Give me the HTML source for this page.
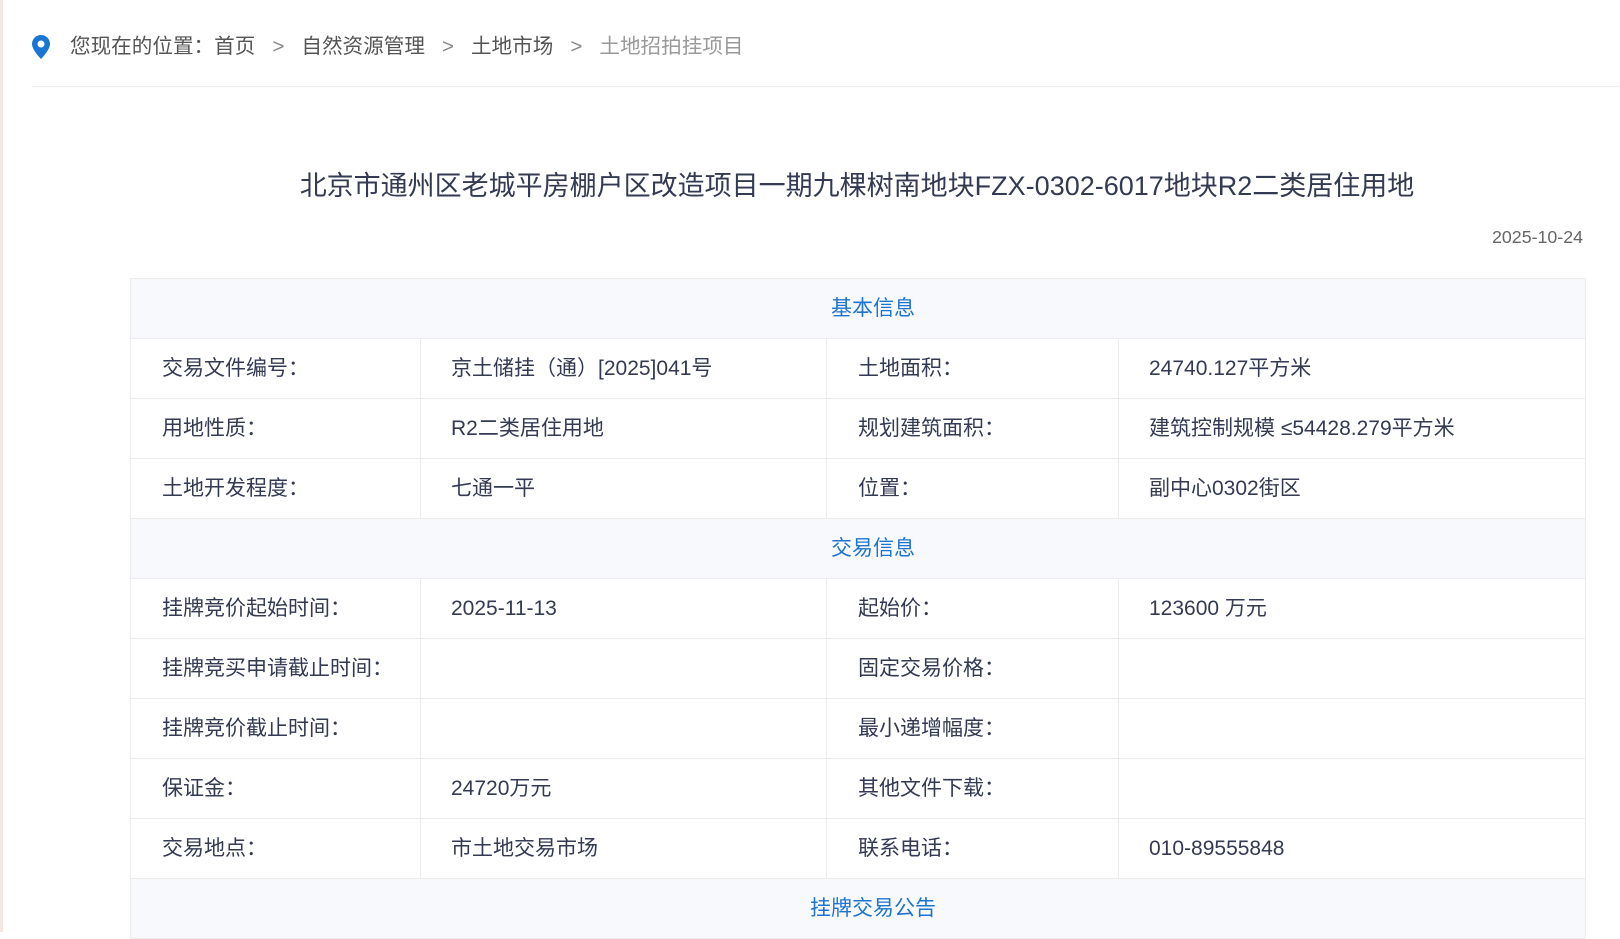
<!DOCTYPE html>
<html><head><meta charset="utf-8"><style>
html,body{margin:0;padding:0;background:#fff;width:1620px;height:932px;overflow:hidden;font-family:"Liberation Sans","Noto Sans CJK SC",sans-serif;}
.stripe{position:absolute;left:0;top:0;width:3px;height:932px;background:#f6e6e4;}
.bc{position:absolute;left:70px;top:32px;font-size:20.6px;color:#555;line-height:30px;white-space:nowrap;}
.bc .sep{color:#888;margin:0 17px;}
.bc .last{color:#999;}
.pin{position:absolute;left:32px;top:35px;}
.hr{position:absolute;left:32px;right:0;top:86px;height:1px;background:#ececec;}
.title{position:absolute;left:130px;width:1454px;top:167px;text-align:center;font-size:27px;color:#333a52;line-height:38px;white-space:nowrap;}
.date{position:absolute;right:37px;top:227px;font-size:17.8px;color:#666;}
table{position:absolute;left:130px;top:278px;width:1455px;border-collapse:collapse;table-layout:fixed;}
td{height:60px;border:1px solid #ececec;font-size:21px;line-height:1;vertical-align:middle;color:#333a52;padding:0 0 0 31px;box-sizing:border-box;white-space:nowrap;}
td.v{padding-left:30px;}
td.h{background:#f8f9fd;color:#1e74cf;text-align:center;padding:0 0 0 30px;font-size:21px;}
</style></head><body>
<div class="stripe"></div>
<svg class="pin" width="18" height="24" viewBox="0 0 18 24"><path d="M9 0C4 0 0 4 0 9c0 6 9 15 9 15s9-9 9-15C18 4 14 0 9 0z" fill="#1976d2"/><circle cx="9" cy="9" r="3.5" fill="#fff"/></svg>
<div class="bc">您现在的位置：首页<span class="sep">&gt;</span>自然资源管理<span class="sep">&gt;</span>土地市场<span class="sep">&gt;</span><span class="last">土地招拍挂项目</span></div>
<div class="hr"></div>
<div class="title">北京市通州区老城平房棚户区改造项目一期九棵树南地块FZX-0302-6017地块R2二类居住用地</div>
<div class="date">2025-10-24</div>
<table>
<colgroup><col style="width:290px"><col style="width:406px"><col style="width:292px"><col style="width:467px"></colgroup>
<tr><td class="h" colspan="4">基本信息</td></tr>
<tr><td>交易文件编号：</td><td class="v">京土储挂（通）[2025]041号</td><td>土地面积：</td><td class="v">24740.127平方米</td></tr>
<tr><td>用地性质：</td><td class="v">R2二类居住用地</td><td>规划建筑面积：</td><td class="v">建筑控制规模 ≤54428.279平方米</td></tr>
<tr><td>土地开发程度：</td><td class="v">七通一平</td><td>位置：</td><td class="v">副中心0302街区</td></tr>
<tr><td class="h" colspan="4">交易信息</td></tr>
<tr><td>挂牌竞价起始时间：</td><td class="v">2025-11-13</td><td>起始价：</td><td class="v">123600 万元</td></tr>
<tr><td>挂牌竞买申请截止时间：</td><td class="v"></td><td>固定交易价格：</td><td class="v"></td></tr>
<tr><td>挂牌竞价截止时间：</td><td class="v"></td><td>最小递增幅度：</td><td class="v"></td></tr>
<tr><td>保证金：</td><td class="v">24720万元</td><td>其他文件下载：</td><td class="v"></td></tr>
<tr><td>交易地点：</td><td class="v">市土地交易市场</td><td>联系电话：</td><td class="v">010-89555848</td></tr>
<tr><td class="h" colspan="4">挂牌交易公告</td></tr>
</table>
</body></html>
